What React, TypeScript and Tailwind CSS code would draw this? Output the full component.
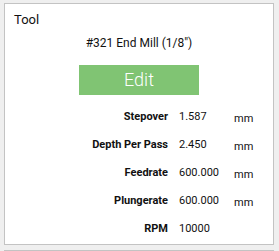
import React from 'react'

const rows = [
  { label: 'Stepover', value: '1.587', unit: 'mm' },
  { label: 'Depth Per Pass', value: '2.450', unit: 'mm' },
  { label: 'Feedrate', value: '600.000', unit: 'mm' },
  { label: 'Plungerate', value: '600.000', unit: 'mm' },
  { label: 'RPM', value: '10000', unit: '' },
]

export default function App() {
  return (
    <div className="w-[279px] h-[251px] overflow-hidden bg-[#efefef] pl-[4px] pt-[3px] font-['Roboto',sans-serif] text-[#111]">
      <div className="w-[270px] h-[242px] border border-[#c3c3c3] bg-white">
        <div className="pl-[9px] pt-[8px] text-[13px] leading-[16px]">Tool</div>
        <div className="mt-[8px] text-center text-[12px] leading-[14px]">#321 End Mill (1/8")</div>
        <div className="mt-[15px] flex justify-center">
          <button className="w-[120px] h-[30px] bg-[#80c473] text-white text-[18px] font-light leading-none">
            Edit
          </button>
        </div>
        <div className="mt-[13px] grid grid-cols-[163px_44px_auto] auto-rows-[17px] gap-x-[11px] gap-y-[11px] text-[11px] leading-[17px]">
          {rows.map((r) => (
            <React.Fragment key={r.label}>
              <div className="text-right font-bold">{r.label}</div>
              <div>{r.value}</div>
              <div className="translate-y-[2px]">{r.unit}</div>
            </React.Fragment>
          ))}
        </div>
      </div>
      <div className="mt-[5px] w-[270px] h-[20px] border border-[#c3c3c3] bg-white" />
    </div>
  )
}
